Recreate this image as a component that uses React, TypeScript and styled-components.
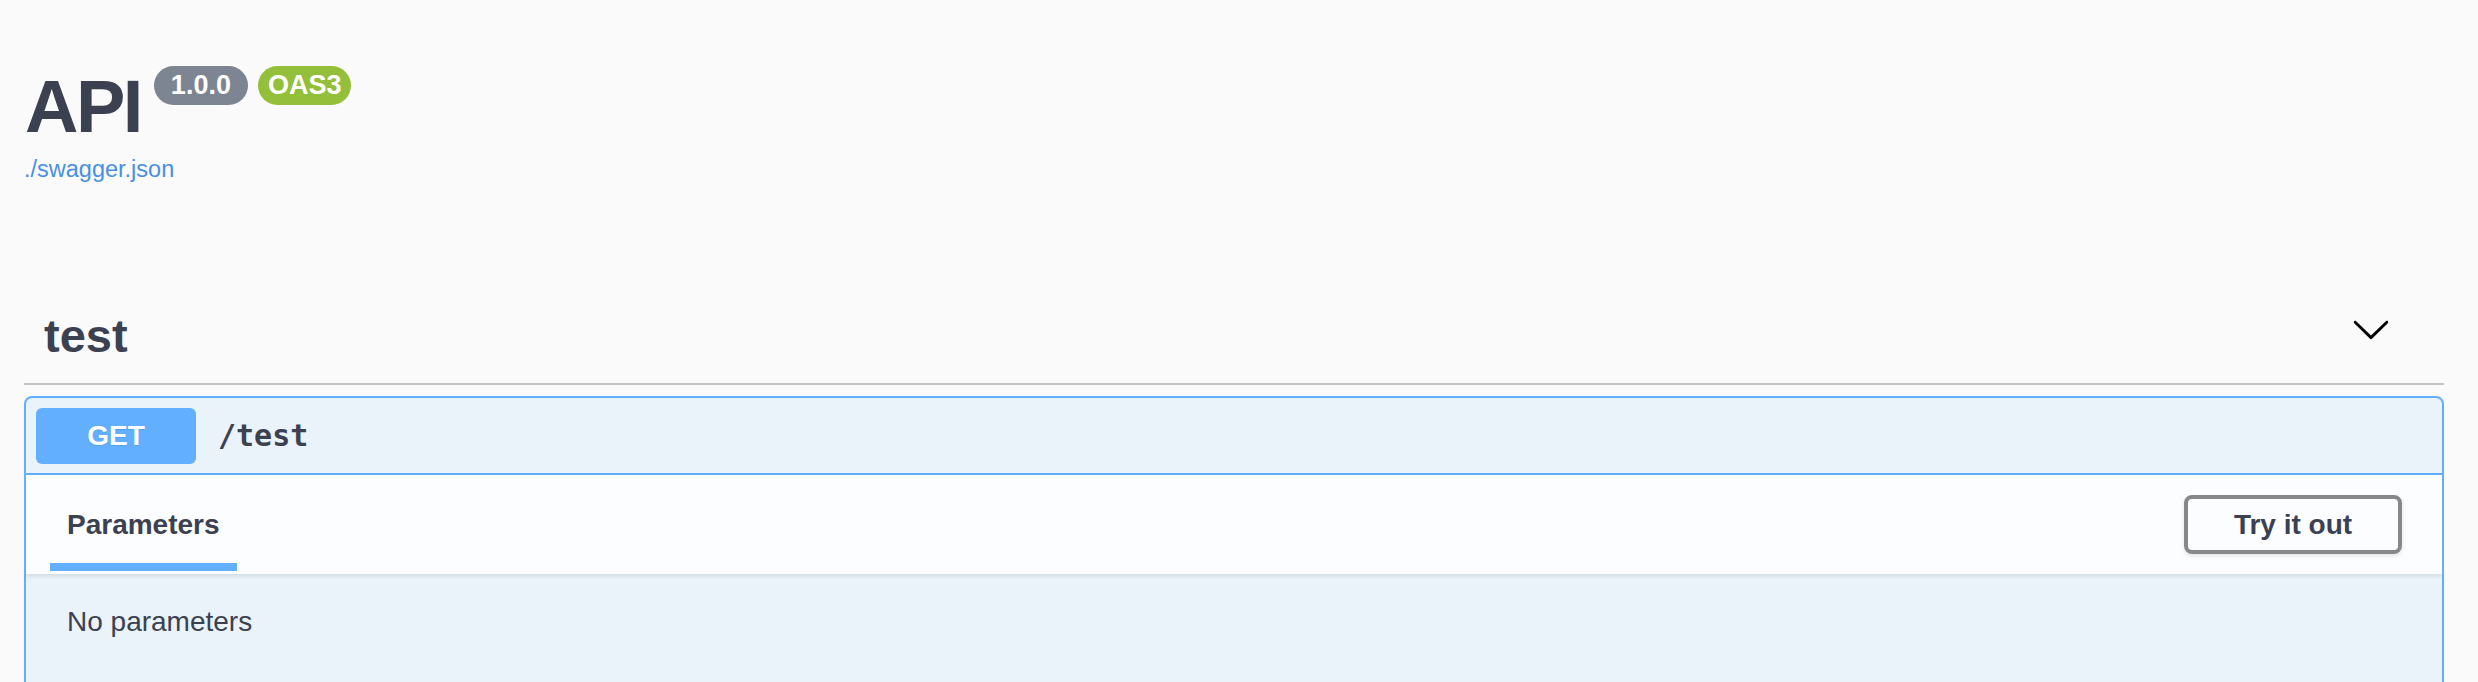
import React from "react";
import styled, { createGlobalStyle } from "styled-components";

const GlobalStyle = createGlobalStyle`
  html, body {
    margin: 0;
    padding: 0;
    background: #fafafa;
  }
  body {
    font-family: "Liberation Sans", Arial, Helvetica, sans-serif;
    color: #3b4151;
  }
  * { box-sizing: border-box; }
`;

const Wrapper = styled.div`
  padding: 66px 34px 0 24px;
`;

const Info = styled.div`
  display: flex;
  flex-direction: column;
  align-items: flex-start;
`;

const TitleRow = styled.div`
  display: flex;
  align-items: flex-start;
`;

const Title = styled.h2`
  margin: 0 0 0 1px;
  font-size: 74px;
  line-height: 82px;
  font-weight: 700;
  color: #3b4151;
  letter-spacing: -2.5px;
`;

const Badge = styled.span<{ $bg: string; $px: number; $ml: number }>`
  display: inline-block;
  height: 39px;
  margin-left: ${(p) => p.$ml}px;
  padding: 0 ${(p) => p.$px}px;
  border-radius: 39px;
  background: ${(p) => p.$bg};
  color: #fff;
  font-size: 27px;
  line-height: 39px;
  font-weight: 700;
  white-space: nowrap;
`;

const SpecLink = styled.a`
  margin-top: 7px;
  font-size: 23.5px;
  line-height: 28px;
  color: #4990e2;
  text-decoration: none;
`;

const TagSection = styled.section`
  margin-top: 95px;
`;

const TagRow = styled.div`
  display: flex;
  align-items: center;
  justify-content: space-between;
  height: 107px;
  padding-left: 20px;
  border-bottom: 2px solid rgba(59, 65, 81, 0.3);
`;

const TagName = styled.h3`
  margin: 10px 0 0;
  font-size: 47px;
  line-height: 54px;
  font-weight: 700;
  color: #3b4151;
`;

const ExpandIcon = styled.svg`
  width: 40px;
  height: 40px;
  margin-right: 53px;
  margin-bottom: 4px;
  fill: #000;
`;

const OpBlock = styled.div`
  margin-top: 11px;
  border: 2px solid #61affe;
  border-radius: 8px;
  background: rgba(97, 175, 254, 0.1);
  overflow: hidden;
`;

const Summary = styled.div`
  display: flex;
  align-items: center;
  height: 77px;
  padding: 0 10px;
  border-bottom: 2px solid #61affe;
`;

const MethodBadge = styled.span`
  display: flex;
  align-items: center;
  justify-content: center;
  width: 160px;
  height: 56px;
  border-radius: 6px;
  background: #61affe;
  color: #fff;
  font-size: 28px;
  font-weight: 700;
  text-shadow: 0 1px 0 rgba(0, 0, 0, 0.1);
`;

const PathText = styled.span`
  margin-left: 22px;
  font-family: "DejaVu Sans Mono", "Liberation Mono", monospace;
  font-size: 30px;
  font-weight: 700;
  color: #3b4151;
`;

const SectionHeader = styled.div`
  display: flex;
  align-items: center;
  justify-content: space-between;
  height: 99px;
  padding: 0 40px 0 24px;
  background: rgba(255, 255, 255, 0.8);
  box-shadow: 0 2px 4px rgba(0, 0, 0, 0.1);
`;

const TabLabel = styled.h4`
  align-self: flex-end;
  margin: 0 0 3px;
  padding: 0 17px 22px;
  font-size: 28px;
  line-height: 32px;
  font-weight: 700;
  color: #3b4151;
  border-bottom: 8px solid #61affe;
`;

const TryButton = styled.button`
  width: 218px;
  height: 59px;
  border: 4px solid #888;
  border-radius: 8px;
  background: transparent;
  box-shadow: 0 2px 4px rgba(0, 0, 0, 0.1);
  font-family: "Liberation Sans", Arial, sans-serif;
  font-size: 28px;
  font-weight: 700;
  color: #3b4151;
  cursor: pointer;
`;

const SectionBody = styled.div`
  min-height: 160px;
  padding: 32px 41px;
`;

const Empty = styled.div`
  font-size: 28px;
  line-height: 32px;
  color: #3b4151;
`;

export default function App() {
  return (
    <>
      <GlobalStyle />
      <Wrapper>
        <Info>
          <TitleRow>
            <Title>API</Title>
            <Badge $bg="#7d8492" $px={17} $ml={13}>1.0.0</Badge>
            <Badge $bg="#94bf3b" $px={10} $ml={10}>OAS3</Badge>
          </TitleRow>
          <SpecLink href="#">./swagger.json</SpecLink>
        </Info>

        <TagSection>
          <TagRow>
            <TagName>test</TagName>
            <ExpandIcon viewBox="0 0 20 20" aria-hidden="true">
              <path d="M17.418 6.109c.272-.268.709-.268.979 0s.271.701 0 .969l-7.908 7.83c-.27.268-.707.268-.979 0l-7.908-7.830c-.27-.268-.27-.701 0-.969.271-.268.709-.268.979 0L10 13.25l7.418-7.141z" />
            </ExpandIcon>
          </TagRow>

          <OpBlock>
            <Summary>
              <MethodBadge>GET</MethodBadge>
              <PathText>/test</PathText>
            </Summary>
            <SectionHeader>
              <TabLabel>Parameters</TabLabel>
              <TryButton>Try it out</TryButton>
            </SectionHeader>
            <SectionBody>
              <Empty>No parameters</Empty>
            </SectionBody>
          </OpBlock>
        </TagSection>
      </Wrapper>
    </>
  );
}
